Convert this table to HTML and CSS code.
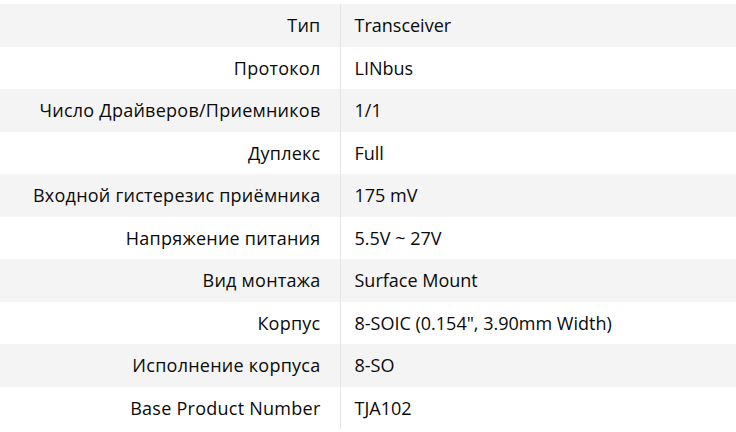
FILE: index.html
```html
<!DOCTYPE html>
<html lang="ru">
<head>
<meta charset="utf-8">
<link rel="stylesheet" href="styles.css">
</head>
<body>
<table class="specs">
<tbody>
<tr><th>Тип</th><td>Transceiver</td></tr>
<tr><th>Протокол</th><td>LINbus</td></tr>
<tr><th>Число Драйверов/Приемников</th><td>1/1</td></tr>
<tr><th>Дуплекс</th><td>Full</td></tr>
<tr><th>Входной гистерезис приёмника</th><td>175 mV</td></tr>
<tr><th>Напряжение питания</th><td>5.5V ~ 27V</td></tr>
<tr><th>Вид монтажа</th><td>Surface Mount</td></tr>
<tr><th>Корпус</th><td>8-SOIC (0.154", 3.90mm Width)</td></tr>
<tr><th>Исполнение корпуса</th><td>8-SO</td></tr>
<tr><th>Base Product Number</th><td>TJA102</td></tr>
</tbody>
</table>
</body>
</html>
```
FILE: styles.css
```css
html, body {
  margin: 0;
  padding: 0;
  background: #fff;
}
body {
  padding-top: 4px;
  font-family: "Open Sans", "Noto Sans", sans-serif;
  font-size: 18px;
  color: #0a0a0a;
}
.specs {
  width: 736px;
  border-collapse: collapse;
  table-layout: fixed;
}
.specs tr {
  height: 42.5px;
}
.specs tr:nth-child(odd) {
  background: #f4f4f4;
}
.specs th {
  width: 340px;
  box-sizing: border-box;
  text-align: right;
  font-weight: 500;
  letter-spacing: 0.25px;
  padding: 0 19px 0 0;
  border-right: 1px solid #e4e4e4;
  white-space: nowrap;
}
.specs td {
  padding: 0 0 0 14px;
  font-weight: 500;
  white-space: nowrap;
}
```
